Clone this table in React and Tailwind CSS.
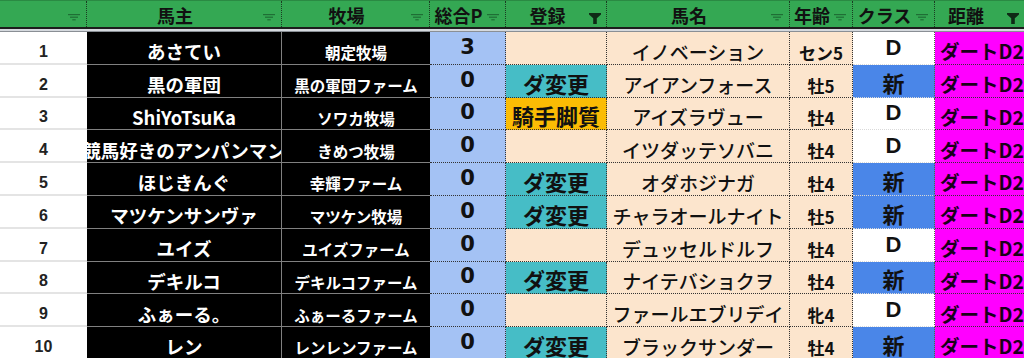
import React from 'react';

const ROWS = [
  { n: 1, owner: 'あさてい', farm: '朝定牧場', pt: 3, reg: '', horse: 'イノベーション', age: 'セン5', cls: 'D' },
  { n: 2, owner: '黒の軍団', farm: '黒の軍団ファーム', pt: 0, reg: 'ダ変更', horse: 'アイアンフォース', age: '牡5', cls: '新' },
  { n: 3, owner: 'ShiYoTsuKa', farm: 'ソワカ牧場', pt: 0, reg: '騎手脚質', horse: 'アイズラヴュー', age: '牡4', cls: 'D' },
  { n: 4, owner: '競馬好きのアンパンマン', farm: 'きめつ牧場', pt: 0, reg: '', horse: 'イツダッテソバニ', age: '牡4', cls: 'D' },
  { n: 5, owner: 'ほじきんぐ', farm: '幸輝ファーム', pt: 0, reg: 'ダ変更', horse: 'オダホジナガ', age: '牡4', cls: '新' },
  { n: 6, owner: 'マツケンサンヴァ', farm: 'マツケン牧場', pt: 0, reg: 'ダ変更', horse: 'チャラオールナイト', age: '牡5', cls: '新' },
  { n: 7, owner: 'ユイズ', farm: 'ユイズファーム', pt: 0, reg: '', horse: 'デュッセルドルフ', age: '牡4', cls: 'D' },
  { n: 8, owner: 'デキルコ', farm: 'デキルコファーム', pt: 0, reg: 'ダ変更', horse: 'ナイテバショクヲ', age: '牡4', cls: '新' },
  { n: 9, owner: 'ふぁーる。', farm: 'ふぁーるファーム', pt: 0, reg: '', horse: 'ファールエブリデイ', age: '牝4', cls: 'D' },
  { n: 10, owner: 'レン', farm: 'レンレンファーム', pt: 0, reg: 'ダ変更', horse: 'ブラックサンダー', age: '牡4', cls: '新' },
];

function FilterLines() {
  return (
    <svg width="12" height="7" viewBox="0 0 12 7" className="shrink-0 mt-[6px] mr-[6px]">
      <rect x="0" y="0" width="12" height="1.2" fill="#1f6e35" />
      <rect x="2" y="2.6" width="8" height="1.2" fill="#1f6e35" />
      <rect x="4.3" y="5.2" width="3.4" height="1.2" fill="#1f6e35" />
    </svg>
  );
}

function FilterOn() {
  return (
    <svg width="12" height="11" viewBox="0 0 12 11" className="shrink-0 mt-[8px] mr-[5px]">
      <path d="M0 0H12V1.5L7.8 5.2V11H4.2V5.2L0 1.5Z" fill="#0f2a16" />
    </svg>
  );
}

function Head({ w, label, on }) {
  return (
    <div className={`${w} shrink-0 flex items-center border-r border-dotted border-[#1b3b22]`}>
      <span className="flex-1 text-center pt-[1px] text-[18px] font-bold leading-none text-[#111] whitespace-nowrap">{label}</span>
      {on ? <FilterOn /> : <FilterLines />}
    </div>
  );
}

export default function App() {
  return (
    <div className="w-[1024px] h-[358px] overflow-hidden bg-white font-['Noto_Sans_CJK_JP',sans-serif]">
      {/* header */}
      <div className="flex h-[29px] bg-[#34a853] border-t border-[#2a8a43] border-b-2 border-b-[#1d1d1d]">
        <Head w="w-[87px]" label="" />
        <Head w="w-[195px]" label="馬主" />
        <Head w="w-[148px]" label="牧場" />
        <Head w="w-[76px]" label="総合P" />
        <Head w="w-[101px]" label="登録" on />
        <Head w="w-[183px]" label="馬名" />
        <Head w="w-[63px]" label="年齢" />
        <Head w="w-[82px]" label="クラス" />
        <div className="flex-1 flex items-center">
          <span className="flex-1 text-center pt-[1px] pr-[10px] text-[18px] font-bold leading-none text-[#111]">距離</span>
          <FilterOn />
        </div>
      </div>
      <div className="h-[3px] bg-[#d5d9de] border-b border-[#8a8f95]" />

      {ROWS.map((r) => (
        <div key={r.n} className="flex h-[32.8px]">
          <div className="w-[87px] shrink-0 flex items-end justify-center pb-[3px] bg-white border-b-2 border-[#e4e4e4] font-['Liberation_Sans',sans-serif] text-[16px] font-bold leading-none text-[#222]">
            {r.n}
          </div>
          <div className="w-[195px] shrink-0 overflow-hidden flex items-end justify-center pb-[3px] bg-black border-r border-b border-[#808080] text-[18.5px] font-bold leading-none text-white whitespace-nowrap">
            {r.owner}
          </div>
          <div className="w-[148px] shrink-0 overflow-hidden flex items-end justify-center pb-[3px] bg-black border-b border-[#808080] text-[15.5px] font-bold leading-none text-white whitespace-nowrap">
            {r.farm}
          </div>
          <div className="w-[76px] shrink-0 flex items-end justify-center pb-[6px] bg-[#a4c2f4] border-r border-b border-dotted border-[#333] font-['DejaVu_Sans',sans-serif] text-[21px] font-bold leading-none text-[#111]">
            {r.pt}
          </div>
          {r.reg === '' ? (
            <div className="w-[101px] shrink-0 bg-[#fce5cd] border-r border-b border-dotted border-[#333]" />
          ) : r.reg === 'ダ変更' ? (
            <div className="w-[101px] shrink-0 flex items-end justify-center pb-[3px] bg-[#46bdc6] border-r border-b border-dotted border-[#333] text-[22px] font-bold leading-none text-[#111] whitespace-nowrap">
              {r.reg}
            </div>
          ) : (
            <div className="w-[101px] shrink-0 flex items-end justify-center pb-[3px] bg-[#fbbc04] border-r border-b border-dotted border-[#333] text-[22px] font-bold leading-none text-[#111] whitespace-nowrap">
              {r.reg}
            </div>
          )}
          <div className="w-[183px] shrink-0 overflow-hidden flex items-end justify-center pb-[3px] bg-[#fce5cd] border-r border-b border-dotted border-[#333] text-[19px] font-medium leading-none text-[#111] whitespace-nowrap">
            {r.horse}
          </div>
          <div className="w-[63px] shrink-0 flex items-end justify-center pb-[3px] bg-[#fce5cd] border-r border-b border-dotted border-[#333] text-[17px] font-bold leading-none text-[#111] whitespace-nowrap">
            {r.age}
          </div>
          {r.cls === 'D' ? (
            <div className="w-[82px] shrink-0 flex items-end justify-center pb-[5px] bg-white border-r border-dotted border-r-[#555] border-b border-b-solid border-b-[#d9d9d9] font-['Liberation_Sans',sans-serif] text-[22px] font-bold leading-none text-[#111]">
              {r.cls}
            </div>
          ) : (
            <div className="w-[82px] shrink-0 flex items-end justify-center pb-[4px] bg-[#4a86e8] border-r border-dotted border-r-[#555] border-b border-b-solid border-b-[#d9d9d9] text-[22px] font-bold leading-none text-[#111]">
              {r.cls}
            </div>
          )}
          <div className="flex-1 overflow-hidden flex items-end pl-[5px] pb-[3px] bg-[#ff00ff] border-b border-dotted border-[#333] text-[19.5px] font-bold leading-none text-[#1a001a] whitespace-nowrap">
            ダートD2
          </div>
        </div>
      ))}
    </div>
  );
}
